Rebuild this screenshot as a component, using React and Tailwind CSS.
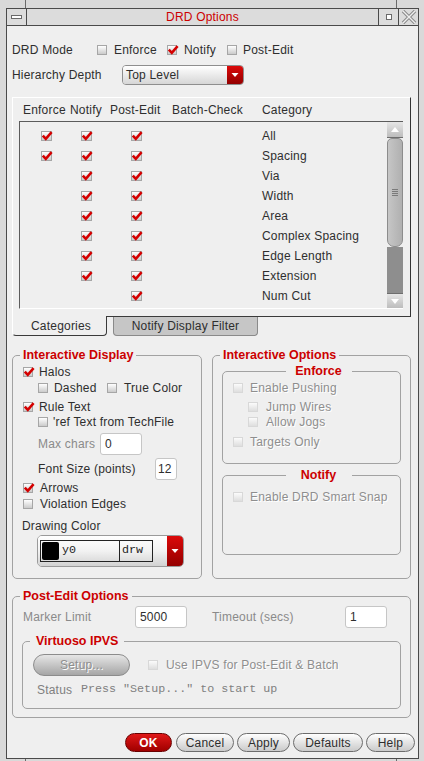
import React from 'react'

const SANS = "font-['Liberation_Sans',Arial,Helvetica,sans-serif]"
const MONO = "font-['Liberation_Mono','Courier_New',monospace]"
const DIM = "text-[#8e8e8e] [text-shadow:1px_1px_0_#ffffff]"
const LEGEND = "text-[#cc0000] font-bold text-[12.5px] leading-[14px] tracking-normal"

const categories = [
  ['All', true, true, true],
  ['Spacing', true, true, true],
  ['Via', false, true, true],
  ['Width', false, true, true],
  ['Area', false, true, true],
  ['Complex Spacing', false, true, true],
  ['Edge Length', false, true, true],
  ['Extension', false, true, true],
  ['Num Cut', false, false, true],
]

function Box({ on, off, size = 'w-[10px] h-[10px]' }) {
  return (
    <span
      className={`relative block shrink-0 border ${size} ${
        off
          ? 'border-[#d8d8d8] bg-linear-to-b from-[#fbfbfb] to-[#dedede]'
          : 'border-[#a6a6a6] bg-linear-to-b from-white to-[#cbcbcb]'
      }`}
    >
      {on && (
        <svg className="absolute -left-px -top-[2px]" width="12" height="12" viewBox="0 0 12 12">
          <path d="M1.8 5.6 L4.8 8.8 L10.6 2.2" fill="none" stroke="#d40000" strokeWidth="2.6" />
        </svg>
      )}
    </span>
  )
}

function Opt({ on, off, label, gap = 'gap-[6px]' }) {
  return (
    <div className={`flex items-center ${gap}`}>
      <Box on={on} off={off} />
      <span className={off ? DIM : ''}>{label}</span>
    </div>
  )
}

function RedArrow() {
  return (
    <div className="w-[16px] bg-linear-to-b from-[#dc0a0a] to-[#940000] flex items-center justify-center">
      <svg width="8" height="6" viewBox="0 0 8 6">
        <path d="M0.5 1 L7.5 1 L4 5 Z" fill="#ffffff" />
      </svg>
    </div>
  )
}

function Field({ w, children }) {
  return (
    <div className={`${w} h-[22px] bg-white border border-[#c6c6c6] rounded-[3px] flex items-center pl-[4px]`}>
      {children}
    </div>
  )
}

function Btn({ w, children }) {
  return (
    <div className={`${w} h-[19px] rounded-full border border-[#6c6c6c] bg-linear-to-b from-white to-[#cacaca] flex items-center justify-center`}>
      {children}
    </div>
  )
}

function ScrollArrow({ up }) {
  return (
    <svg width="10" height="7" viewBox="0 0 10 7">
      {up ? <path d="M1 6 L5 1 L9 6 Z" fill="#ffffff" /> : <path d="M1 1 L9 1 L5 6 Z" fill="#ffffff" />}
    </svg>
  )
}

export default function App() {
  return (
    <div className={`w-[424px] h-[761px] bg-[#d9d9d9] flex flex-col overflow-hidden ${SANS} text-[12px] tracking-[0.2px] text-[#2e2e2e]`}>
      {/* frame top */}
      <div className="h-[8px] flex shrink-0">
        <div className="w-[26px] border-r border-[#6a6a6a]" />
        <div className="flex-1" />
        <div className="w-[28px] border-l border-[#6a6a6a]" />
      </div>

      <div className="flex-1 min-h-0 ml-[6px] mr-[5px] flex flex-col border border-[#4a4a4a]">
        {/* title bar */}
        <div className="h-[17px] shrink-0 flex border-b border-[#4a4a4a] bg-[#dcdcdc]">
          <div className="w-[20px] border-r border-[#4a4a4a] flex items-center justify-center">
            <span className="block w-[11px] h-[4px] border border-[#6a6a6a] bg-white" />
          </div>
          <div className="flex-1 flex items-center justify-center text-[#cc0000]">DRD Options</div>
          <div className="w-[20px] border-l border-[#4a4a4a] flex items-center justify-center">
            <span className="block w-[6px] h-[6px] border border-[#6a6a6a] bg-white" />
          </div>
          <div className="w-[20px] border-l border-[#4a4a4a] flex items-center justify-center">
            <svg width="16" height="14" viewBox="0 0 16 14">
              <path d="M2 1 L14 13 M14 1 L2 13" stroke="#8a8a8a" strokeWidth="3.4" />
              <path d="M2 1 L14 13 M14 1 L2 13" stroke="#efefef" strokeWidth="1.4" />
            </svg>
          </div>
        </div>

        {/* content */}
        <div className="flex-1 min-h-0 bg-[#efefef] flex flex-col">
          {/* DRD Mode */}
          <div className="mt-[16px] h-[16px] flex items-center pl-[5px]">
            <span className="w-[85px]">DRD Mode</span>
            <div className="w-[70px]"><Opt label="Enforce" gap="gap-[7px]" /></div>
            <div className="w-[60px]"><Opt on label="Notify" gap="gap-[7px]" /></div>
            <Opt label="Post-Edit" />
          </div>

          {/* Hierarchy Depth */}
          <div className="mt-[7px] h-[20px] flex items-center pl-[5px]">
            <span className="w-[110px]">Hierarchy Depth</span>
            <div className="w-[122px] h-[20px] flex rounded-[4px] border border-[#8e8e8e] overflow-hidden">
              <div className="flex-1 bg-linear-to-b from-white to-[#d6d6d6] flex items-center pl-[3px]">Top Level</div>
              <RedArrow />
            </div>
          </div>

          {/* tab panel */}
          <div className="mt-[12px] ml-[5px] w-[399px] h-[219px] border-t border-l border-r border-t-white border-l-white border-r-[#333333] flex flex-col">
            <div className="h-[23px] flex items-center pl-[10px]">
              <span className="w-[47px]">Enforce</span>
              <span className="w-[40px]">Notify</span>
              <span className="w-[62px]">Post-Edit</span>
              <span className="w-[90px]">Batch-Check</span>
              <span>Category</span>
            </div>
            <div className="ml-[6px] w-[384px] h-[188px] flex border-t border-l border-b border-t-[#5c5c5c] border-l-[#5c5c5c] border-b-white">
              <div className="flex-1 pt-[4px]">
                {categories.map(([name, e, n, p]) => (
                  <div key={name} className="h-[20px] flex items-center pl-[21px]">
                    <div className="w-[40px]">{e && <Box on size="w-[11px] h-[10px]" />}</div>
                    <div className="w-[50px]">{n && <Box on size="w-[11px] h-[10px]" />}</div>
                    <div className="w-[131px]">{p && <Box on size="w-[11px] h-[10px]" />}</div>
                    <span>{name}</span>
                  </div>
                ))}
              </div>
              <div className="w-[16px] flex flex-col">
                <div className="h-[16px] bg-linear-to-b from-[#e6e6e6] to-[#bdbdbd] border-b border-[#6e6e6e] flex items-center justify-center">
                  <ScrollArrow up />
                </div>
                <div className="h-[109px] bg-linear-to-r from-[#c6c6c6] to-[#b0b0b0] border border-[#8c8c8c] rounded-t-[5px] rounded-b-[7px] flex items-center justify-center">
                  <div className="flex flex-col gap-[1px]">
                    <span className="block w-[6px] h-px bg-[#7a7a7a]" />
                    <span className="block w-[6px] h-px bg-[#7a7a7a]" />
                    <span className="block w-[6px] h-px bg-[#7a7a7a]" />
                    <span className="block w-[6px] h-px bg-[#7a7a7a]" />
                  </div>
                </div>
                <div className="flex-1 bg-[#8e8e8e]" />
                <div className="h-[15px] bg-linear-to-b from-[#e6e6e6] to-[#bdbdbd] border-t border-[#6e6e6e] flex items-center justify-center">
                  <ScrollArrow />
                </div>
              </div>
            </div>
          </div>

          {/* tabs */}
          <div className="ml-[5px] w-[399px] h-[20px] flex">
            <div className="w-[95px] h-[20px] border-l border-r border-b border-l-white border-r-[#3a3a3a] border-b-[#3a3a3a] rounded-b-[4px] bg-[#efefef] flex items-center justify-center pl-[3px]">
              Categories
            </div>
            <div className="flex-1 border-t border-[#3a3a3a] pl-[6px]">
              <div className="w-[145px] h-[19px] bg-[#c6c6c6] border-l border-r border-b border-[#8a8a8a] rounded-b-[4px] flex items-center justify-center">
                Notify Display Filter
              </div>
            </div>
          </div>

          {/* interactive groups */}
          <div className="mt-[12px] ml-[5px] flex gap-[10px]">
            <fieldset className="w-[190px] h-[231px] border border-[#a2a2a2] rounded-[5px]">
              <legend className={`ml-[7px] px-[3px] ${LEGEND}`}>Interactive Display</legend>
              <div className="mt-[3px] h-[14px] flex items-center pl-[10px]"><Opt on label="Halos" /></div>
              <div className="mt-[2px] h-[14px] flex items-center pl-[25px]">
                <div className="w-[69px]"><Opt label="Dashed" /></div>
                <Opt label="True Color" gap="gap-[7px]" />
              </div>
              <div className="mt-[5px] h-[14px] flex items-center pl-[10px]"><Opt on label="Rule Text" /></div>
              <div className="mt-[1px] h-[14px] flex items-center pl-[25px]"><Opt label="'ref Text from TechFile" gap="gap-[5px]" /></div>
              <div className="mt-[4px] h-[22px] flex items-center pl-[25px]">
                <span className="w-[62px] text-[#8a8a8a]">Max chars</span>
                <Field w="w-[42px]">0</Field>
              </div>
              <div className="mt-[3px] h-[22px] flex items-center pl-[25px]">
                <span className="w-[117px]">Font Size (points)</span>
                <div className="w-[22px] h-[22px] bg-white border border-[#c6c6c6] rounded-[3px] flex items-center pl-[2px]">12</div>
              </div>
              <div className="mt-[1px] h-[14px] flex items-center pl-[10px]"><Opt on label="Arrows" gap="gap-[7px]" /></div>
              <div className="mt-[2px] h-[14px] flex items-center pl-[10px]"><Opt label="Violation Edges" gap="gap-[7px]" /></div>
              <div className="mt-[8px] h-[14px] flex items-center pl-[9px]">Drawing Color</div>
              <div className="mt-[2px] ml-[24px] w-[147px] h-[32px] flex rounded-[5px] border border-[#9a9a9a] overflow-hidden">
                <div className="flex-1 bg-linear-to-b from-white via-[#f2f2f2] to-[#d2d2d2] flex items-center pl-[2px]">
                  <div className={`w-[113px] h-[22px] border border-[#222222] flex items-stretch ${MONO} text-[11.7px] tracking-normal text-[#1e1e1e]`}>
                    <div className="w-[79px] border-r border-[#222222] flex items-center">
                      <span className="block ml-[1px] w-[17px] h-[18px] bg-black rounded-[2px]" />
                      <span className="ml-[3px]">y0</span>
                    </div>
                    <div className="flex items-center pl-[2px]">drw</div>
                  </div>
                </div>
                <RedArrow />
              </div>
            </fieldset>

            <fieldset className="w-[199px] h-[231px] border border-[#a2a2a2] rounded-[5px]">
              <legend className={`ml-[7px] px-[3px] ${LEGEND}`}>Interactive Options</legend>
              <fieldset className="mx-[9px] mt-[2px] h-[100px] border border-[#a2a2a2] rounded-[5px]">
                <legend className={`ml-[7px] w-[66px] text-center ${LEGEND}`}>Enforce</legend>
                <div className="mt-[3px] h-[14px] flex items-center pl-[10px]"><Opt off label="Enable Pushing" gap="gap-[7px]" /></div>
                <div className="mt-[5px] h-[14px] flex items-center pl-[25px]"><Opt off label="Jump Wires" gap="gap-[8px]" /></div>
                <div className="mt-[1px] h-[14px] flex items-center pl-[25px]"><Opt off label="Allow Jogs" gap="gap-[8px]" /></div>
                <div className="mt-[6px] h-[14px] flex items-center pl-[10px]"><Opt off label="Targets Only" gap="gap-[7px]" /></div>
              </fieldset>
              <fieldset className="mx-[9px] mt-[4px] h-[87px] border border-[#a2a2a2] rounded-[5px]">
                <legend className={`ml-[7px] w-[66px] text-center ${LEGEND}`}>Notify</legend>
                <div className="mt-[8px] h-[14px] flex items-center pl-[10px]"><Opt off label="Enable DRD Smart Snap" gap="gap-[7px]" /></div>
              </fieldset>
            </fieldset>
          </div>

          {/* post-edit */}
          <fieldset className="mt-[10px] ml-[5px] w-[399px] h-[129px] border border-[#a2a2a2] rounded-[5px]">
            <legend className={`ml-[7px] px-[3px] ${LEGEND}`}>Post-Edit Options</legend>
            <div className="mt-[3px] h-[22px] flex items-center pl-[10px]">
              <span className="w-[112px] text-[#8a8a8a]">Marker Limit</span>
              <Field w="w-[52px]">5000</Field>
              <span className="ml-[25px] w-[133px] text-[#8a8a8a]">Timeout (secs)</span>
              <Field w="w-[42px]">1</Field>
            </div>
            <fieldset className="mx-[9px] mt-[6px] h-[75px] border border-[#a2a2a2] rounded-[5px]">
              <legend className={`ml-[7px] px-[6px] ${LEGEND}`}>Virtuoso IPVS</legend>
              <div className="mt-[6px] h-[22px] flex items-center pl-[10px]">
                <div className={`w-[97px] h-[22px] rounded-full border border-[#8c8c8c] bg-linear-to-b from-[#e6e6e6] to-[#a6a6a6] flex items-center justify-center ${DIM}`}>
                  Setup...
                </div>
                <div className="ml-[18px]"><Opt off label="Use IPVS for Post-Edit & Batch" gap="gap-[8px]" /></div>
              </div>
              <div className="mt-[7px] h-[14px] flex items-center pl-[14px] text-[#808080]">
                <span className="w-[44px]">Status</span>
                <span className={`${MONO} text-[11.7px] tracking-normal whitespace-pre`}>Press "Setup..." to start up</span>
              </div>
            </fieldset>
          </fieldset>

          {/* buttons */}
          <div className="mt-[15px] h-[19px] flex justify-end gap-[3px] pr-[3px]">
            <div className="mr-[1px] w-[47px] h-[19px] rounded-full border border-[#6a0000] bg-linear-to-b from-[#e01818] to-[#a00000] flex items-center justify-center text-white font-bold">
              OK
            </div>
            <Btn w="w-[58px]">Cancel</Btn>
            <Btn w="w-[53px]">Apply</Btn>
            <Btn w="w-[70px]">Defaults</Btn>
            <Btn w="w-[49px]">Help</Btn>
          </div>
        </div>
      </div>

      {/* frame bottom */}
      <div className="h-[2px] flex shrink-0">
        <div className="w-[26px] border-r border-[#6a6a6a]" />
        <div className="flex-1" />
        <div className="w-[28px] border-l border-[#6a6a6a]" />
      </div>
    </div>
  )
}
